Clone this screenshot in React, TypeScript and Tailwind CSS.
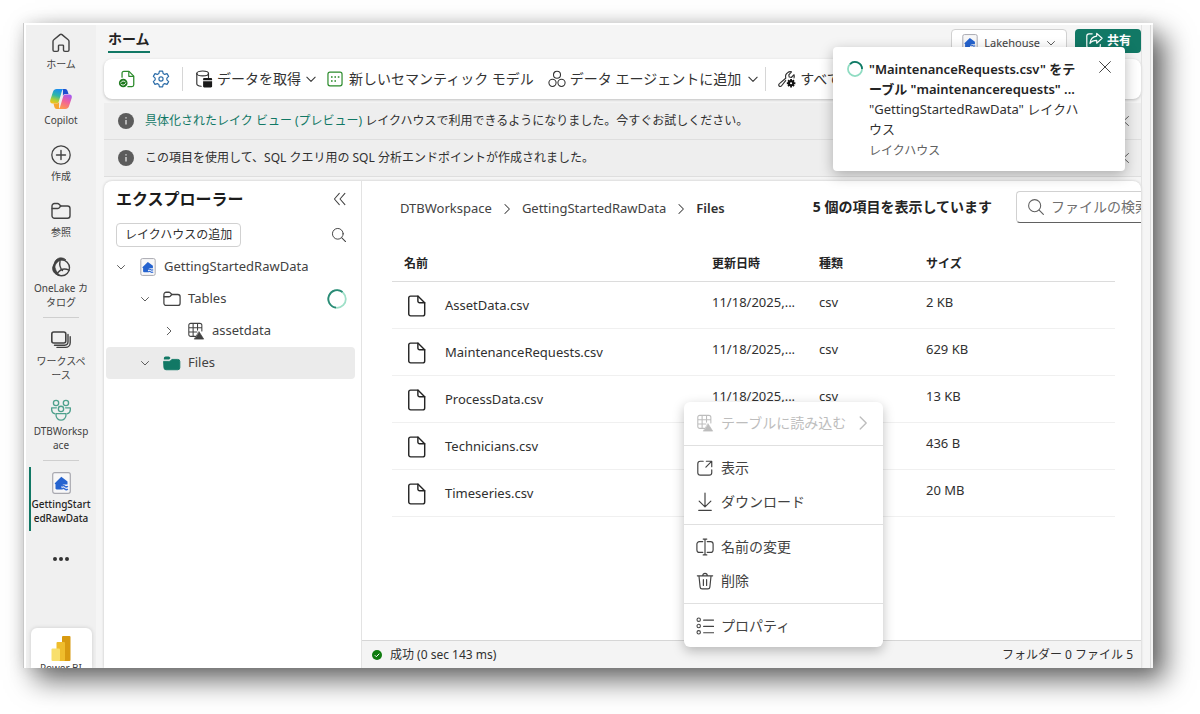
import type { ReactNode } from "react";

type IconProps = { className?: string };

const Svg = ({ className = "size-5", children }: IconProps & { children: ReactNode }) => (
  <svg
    viewBox="0 0 20 20"
    fill="none"
    stroke="currentColor"
    strokeLinecap="round"
    strokeLinejoin="round"
    className={`shrink-0 ${className}`}
    aria-hidden="true"
  >
    {children}
  </svg>
);

const HomeIcon = () => (
  <Svg>
    <path d="M9 1.6a1.6 1.6 0 0 1 2 0l6.2 5.2c.5.4.8 1 .8 1.600v8.600c0 .8-.6 1.400-1.400 1.400h-2.700c-.8 0-1.400-.6-1.400-1.400v-4a.9.9 0 0 0-.9-.9H8.400a.9.9 0 0 0-.9.9v4c0 .8-.6 1.400-1.400 1.400H3.400c-.8 0-1.400-.6-1.400-1.400V8.400c0-.6.3-1.200.8-1.600z" strokeWidth="1.400" />
  </Svg>
);

const CopilotIcon = () => (
  <svg viewBox="0 0 24 24" className="size-6 shrink-0" aria-hidden="true">
    <defs>
      <linearGradient id="cpA" x1="0.6" y1="0" x2="0.3" y2="1">
        <stop offset="0" stopColor="#1b8cf0" />
        <stop offset="0.45" stopColor="#2fb7a8" />
        <stop offset="0.75" stopColor="#a9cf3a" />
        <stop offset="1" stopColor="#f5c11a" />
      </linearGradient>
      <linearGradient id="cpB" x1="0.7" y1="0" x2="0.3" y2="1">
        <stop offset="0" stopColor="#a65bf0" />
        <stop offset="0.45" stopColor="#f0609c" />
        <stop offset="1" stopColor="#ff9a4d" />
      </linearGradient>
    </defs>
    <path d="M14 2h2.200c1.200 0 2 .8 2.400 2l.9 3h-3.200c-1.200 0-2 .7-2.400 2z" fill="#1d4fd0" />
    <path d="M7.500 2h7.300c-1 .3-1.600 1.200-2 2.500l-2.900 9.800c-.4 1.300-1.200 2.200-2.600 2.200H3.600c-2 0-2.900-1.600-2.300-3.500L4.100 4.400C4.600 2.900 5.900 2 7.500 2z" fill="url(#cpA)" />
    <path d="M10 22H7.800c-1.200 0-2-.8-2.400-2l-.9-3.500h3.200c1.200 0 2-.7 2.400-2z" fill="#f7a531" />
    <path d="M16.500 22H9.200c1-.3 1.600-1.200 2-2.500l2.900-9.800c.4-1.300 1.200-2.200 2.600-2.200h3.700c2 0 2.900 1.600 2.300 3.500l-2.800 8.600c-.5 1.500-1.800 2.400-3.400 2.400z" fill="url(#cpB)" />
  </svg>
);

const CreateIcon = () => (
  <Svg>
    <circle cx="10" cy="10" r="9.200" strokeWidth="1.300" />
    <path d="M10 5.500v9M5.500 10h9" strokeWidth="1.400" />
  </Svg>
);

const FolderIcon = ({ className }: IconProps) => (
  <Svg className={className}>
    <path d="M1 5a2.500 2.500 0 0 1 2.500-2.500h3c.6 0 1.200.3 1.600.7L9.800 5h6.700A2.500 2.500 0 0 1 19 7.500v7.200a2.500 2.500 0 0 1-2.500 2.500h-13A2.500 2.500 0 0 1 1 14.700z" strokeWidth="1.400" />
    <path d="M1.200 7.500h5.300c.6 0 1.100-.2 1.500-.6L9.800 5" strokeWidth="1.400" />
  </Svg>
);

const FolderFilledIcon = () => (
  <Svg className="size-[18px] text-[#117865]">
    <path d="M1 8.200h5.500c.8 0 1.500-.3 2-.8l1.300-1.400h6.400A2.300 2.300 0 0 1 18.700 8.300v6.900a2.300 2.300 0 0 1-2.300 2.300H3.300A2.300 2.300 0 0 1 1 15.200z" fill="currentColor" />
    <path d="M1 6V4.800c0-1 .8-1.900 1.900-1.900h3.300c.5 0 1 .2 1.400.6L8.300 4.400 7.100 5.700c-.2.200-.5.300-.8.300z" fill="currentColor" stroke="none" />
  </Svg>
);

const OneLakeIcon = () => (
  <Svg>
    <circle cx="10.500" cy="10.800" r="8" strokeWidth="1.400" />
    <path d="M3 7.500C3.300 3.500 6.500.8 10 .8c2 0 3.800.8 5 2.200-3-.8-5.500-.2-7.500 1.300C5.500 5.800 4 8 3.300 11z" fill="currentColor" strokeWidth=".6" />
    <path d="M3.600 7C.8 9 .8 13.500 3.500 16c1.500 1.500 3.500 2.300 5.500 2.500-3.500-3-5.400-7-5.400-11.500z" fill="currentColor" strokeWidth=".6" />
    <path d="M9 4.500c-.8 3.500.3 6.800 2.500 9M18 13.200c-4-2-8.500-1-11.500 3" strokeWidth="1.400" />
  </Svg>
);

const WorkspacesIcon = () => (
  <Svg>
    <rect x="0.800" y="2" width="14" height="11" rx="2" strokeWidth="1.600" />
    <path d="M17 4.500v7.300a3.400 3.400 0 0 1-3.400 3.400H3.500M19.200 6.800v6a4.600 4.600 0 0 1-4.600 4.600H6" strokeWidth="1.400" />
  </Svg>
);

const PeopleIcon = () => (
  <Svg className="size-[22px] text-[#4fa18d]">
    <circle cx="5.500" cy="3.600" r="2.400" strokeWidth="1.200" />
    <circle cx="14.500" cy="3.600" r="2.400" strokeWidth="1.200" />
    <circle cx="10" cy="9" r="2.400" strokeWidth="1.200" />
    <path d="M5.500 13.300h9v1.400a4.500 4.500 0 0 1-9 0zM5.800 8H1.500v1.600c0 2 1 3.300 2.700 3.800M14.200 8h4.300v1.600c0 2-1 3.300-2.700 3.800" strokeWidth="1.200" />
  </Svg>
);

const LakehouseIcon = ({ className = "h-[22px] w-[19px]" }: IconProps) => (
  <svg viewBox="0 0 19 22" className={`shrink-0 ${className}`} aria-hidden="true">
    <rect x="0.700" y="0.700" width="17.600" height="20.600" rx="2" fill="#f7f7f8" stroke="#a9a9b0" strokeWidth="1.200" />
    <path d="M9.300 4.800 15.500 9.500v3H11l-1.700 2.200 1 2.800H4.700c-.8 0-1.200-.5-1.200-1.200v-4.100c-.7 0-1-.6-.5-1.200z" fill="#2563cf" />
    <path d="M9.800 14.200c1-.9 2-.9 3 0s2 .9 3 0M9.800 17c1-.9 2-.9 3 0s2 .9 3 0" fill="none" stroke="#2f6ad6" strokeWidth="1.500" />
  </svg>
);

const PowerBiIcon = () => (
  <svg viewBox="0 0 20 25" className="h-[25px] w-5 shrink-0" aria-hidden="true">
    <rect x="11" y="0" width="8.500" height="25" rx="1" fill="#d89a10" />
    <rect x="5.500" y="6" width="8.500" height="19" rx="1" fill="#efbd2c" />
    <rect x="0.500" y="12.500" width="8.500" height="12.500" rx="1" fill="#f8df6c" />
  </svg>
);

const ChevronDown = ({ className = "size-3" }: IconProps) => (
  <Svg className={className}><path d="m3 7 7 7 7-7" strokeWidth="1.700" /></Svg>
);
const ChevronRight = ({ className = "size-3" }: IconProps) => (
  <Svg className={className}><path d="m6.500 2.500 7.500 7.500-7.500 7.500" strokeWidth="1.700" /></Svg>
);
const SearchIcon = ({ className = "size-[18px]" }: IconProps) => (
  <Svg className={className}>
    <circle cx="8.500" cy="8.500" r="6.700" strokeWidth="1.200" />
    <path d="m13.500 13.500 4.700 4.700" strokeWidth="1.300" />
  </Svg>
);
const CloseIcon = () => (
  <Svg className="size-3"><path d="m1 1 18 18M19 1 1 19" strokeWidth="1.500" /></Svg>
);
const DoubleChevron = () => (
  <Svg className="size-[14px]"><path d="M9 2 2 10l7 8M17 2l-7 8 7 8" strokeWidth="1.500" /></Svg>
);

const FileRefreshIcon = () => (
  <Svg className="size-[18px] text-[#2a8a2a]">
    <path d="M4.500 8V3.500c0-1.200.8-2 2-2h5.700l5.300 5.300v9.700c0 1.200-.8 2-2 2H11" strokeWidth="1.400" />
    <path d="M12 1.800V7h5.200" strokeWidth="1.300" />
    <circle cx="5.800" cy="14.500" r="4.800" fill="#1e7a1e" stroke="none" />
    <path d="M3.200 14c.8-2 3.800-2.400 5.200-.6M8.400 15c-.8 2-3.800 2.400-5.200.6" stroke="#fff" strokeWidth="1.100" />
  </Svg>
);

const GearIcon = () => (
  <Svg className="size-[18px] text-[#2b6ca8]">
    <path d="M8.200 1.200h3.600l.6 2.700 1.700 1 2.600-.9 1.800 3.100-2 1.900v2l2 1.900-1.800 3.100-2.600-.9-1.700 1-.6 2.700H8.200l-.6-2.700-1.700-1-2.600.9-1.800-3.100 2-1.900V9l-2-1.900L3.300 4l2.600.9 1.700-1z" strokeWidth="1.300" />
    <circle cx="10" cy="10" r="2.300" strokeWidth="1.300" />
  </Svg>
);

const DatabaseIcon = () => (
  <Svg className="size-[18px]">
    <ellipse cx="8.500" cy="3.800" rx="6.500" ry="2.700" strokeWidth="1.300" />
    <path d="M2 3.800v11.600c0 1.500 2 2.500 4.800 2.700M15 3.800v4.500" strokeWidth="1.300" />
    <path d="M9 10.300c0-.8.4-1.300 1.200-1.300h7.500c.8 0 1.300.5 1.300 1.300v1H9zM9 12.500h10v5.600c0 .8-.5 1.300-1.300 1.300h-7.500c-.8 0-1.200-.5-1.200-1.300z" fill="#1a1a1a" stroke="none" />
  </Svg>
);

const SemanticIcon = () => (
  <Svg className="size-4 text-[#2a8a2a]">
    <rect x="1.200" y="1.500" width="17.600" height="17" rx="2.500" strokeWidth="1.500" />
    <path d="M5 7.500h2M9.300 7.500h2M13.500 7.500h2M5 12.500h2M9.300 12.500h2" strokeWidth="2" strokeLinecap="butt" />
  </Svg>
);

const AgentIcon = () => (
  <Svg className="size-[18px]">
    <circle cx="10" cy="5.300" r="3.900" strokeWidth="1.200" />
    <circle cx="5" cy="14.300" r="4" strokeWidth="1.200" />
    <circle cx="15" cy="14.300" r="4" strokeWidth="1.200" />
  </Svg>
);

const WrenchIcon = () => (
  <Svg className="size-[18px]">
    <path d="M8.500 11.700 4 17.500c-.8 1-2 1-2.700.3s-.7-1.900.3-2.700l7-6C8 6.500 8.800 4 11 2.700c1.100-.8 2.500-1 4-.6l-3 3.300.5 2.400 2.300.5 3-3c.5 1.300.4 2.300 0 3.500" strokeWidth="1.300" />
    <path d="M14.500 10v9.500M9.800 14.700h9.500M11.200 11.400l6.600 6.600M17.800 11.400 11.200 18" stroke="#111" strokeWidth="2" strokeLinecap="butt" />
    <circle cx="14.500" cy="14.700" r="3.300" fill="#111" stroke="none" />
    <circle cx="14.500" cy="14.700" r="1.200" fill="#fff" stroke="none" />
  </Svg>
);

const ShareIcon = () => (
  <Svg className="size-[18px]">
    <path d="M8 2H4.500A2.500 2.500 0 0 0 2 4.500v11A2.500 2.500 0 0 0 4.500 18h10a2.500 2.500 0 0 0 2.500-2.500V14" strokeWidth="1.300" />
    <path d="m13 1.500 6 5.500-6 5.500V9.300c-3.500 0-5.800 1-7.500 3.400C6 8 8.500 5 13 4.500z" strokeWidth="1.300" />
  </Svg>
);

const InfoIcon = () => (
  <svg viewBox="0 0 16 16" className="size-4 shrink-0" aria-hidden="true">
    <circle cx="8" cy="8" r="8" fill="#5c5c5c" />
    <path d="M8 7v4.500M8 4.200v1.200" stroke="#e4e4e4" strokeWidth="1.300" />
  </svg>
);

const TableWarnIcon = () => (
  <Svg className="size-[18px]">
    <path d="M9.500 16H4.200A2.200 2.200 0 0 1 2 13.800V3.700c0-1.200 1-2.200 2.200-2.200h10c1.300 0 2.300 1 2.300 2.200V10M2 6.300h14.500M2 11.200h9M6.800 1.500V16M11.700 1.500V9" strokeWidth="1.200" />
    <path d="m13.500 11 5 8h-10z" fill="currentColor" strokeWidth=".8" />
  </Svg>
);

const FileIcon = () => (
  <Svg className="size-[22px] text-[#242424]">
    <path d="M4.200 1h6.600L17 7v10.200c0 1-.8 1.800-1.800 1.800h-11c-.9 0-1.700-.8-1.700-1.800V2.800C2.500 1.800 3.300 1 4.200 1z" strokeWidth="1.300" />
    <path d="M10.800 1.200v4.300c0 .8.700 1.500 1.500 1.500H17" strokeWidth="1.300" />
  </Svg>
);

const OpenIcon = () => (
  <Svg className="size-[18px]">
    <path d="M8 2.500H4.800A2.800 2.800 0 0 0 2 5.300v10A2.800 2.800 0 0 0 4.800 18h9.900a2.800 2.800 0 0 0 2.800-2.700V12M11.500 2.500h6v6M17.300 2.700 11 9" strokeWidth="1.300" />
  </Svg>
);
const DownloadIcon = () => (
  <Svg className="h-[22px] w-[18px]">
    <path d="M10 0v15M3.500 9l6.500 6.500L16.500 9M3 19.300h14" strokeWidth="1.300" />
  </Svg>
);
const RenameIcon = () => (
  <Svg className="size-[18px]">
    <path d="M7.500 4H3.800A2.800 2.800 0 0 0 1 6.800v6.400A2.800 2.800 0 0 0 3.800 16h3.700M12.500 4h3.700A2.800 2.800 0 0 1 19 6.800v6.400a2.800 2.800 0 0 1-2.800 2.800h-3.700M10 1.200v17.600M8 1.200h4M8 18.800h4" strokeWidth="1.300" />
  </Svg>
);
const TrashIcon = () => (
  <Svg className="size-[18px]">
    <path d="M1.500 4.300h17M7.500 4a2.500 2.500 0 0 1 5 0M3.300 4.500l1.300 12.300c.1 1.200 1 2 2.200 2h6.400c1.200 0 2.100-.8 2.200-2l1.300-12.300M8.200 8.500v6.500M11.800 8.500v6.500" strokeWidth="1.300" />
  </Svg>
);
const ListIcon = () => (
  <Svg className="size-[18px]">
    <circle cx="3" cy="3" r="1.900" strokeWidth="1.200" />
    <circle cx="3" cy="10" r="1.900" strokeWidth="1.200" />
    <circle cx="3" cy="17" r="1.900" strokeWidth="1.200" />
    <path d="M8.500 3.500h11M8.500 10.500h11M8.500 17.500h11" strokeWidth="1.300" />
  </Svg>
);

const Spinner = ({ className = "size-5" }: IconProps) => (
  <svg viewBox="0 0 20 20" fill="none" className={`shrink-0 ${className}`} role="img" aria-label="loading">
    <circle cx="10" cy="10" r="8.800" stroke="#9fe0c8" strokeWidth="1.800" />
    <path d="M9 18.700A8.800 8.800 0 1 1 15.500 3" stroke="#2b8a76" strokeWidth="1.800" />
  </svg>
);

const SpinnerTop = () => (
  <svg viewBox="0 0 20 20" fill="none" className="size-4 shrink-0" role="img" aria-label="loading">
    <circle cx="10" cy="10" r="8.800" stroke="#8fdcc2" strokeWidth="2.200" />
    <path d="M3.800 3.800A8.800 8.800 0 0 1 18.800 10" stroke="#117865" strokeWidth="2.200" />
  </svg>
);

const RailItem = ({ icon, lines }: { icon: ReactNode; lines: string[] }) => (
  <a href="#" className="flex w-full flex-col items-center gap-0.5 pt-1 pb-3">
    <span className="flex h-6 items-center">{icon}</span>
    <span className="flex flex-col items-center text-[10px] leading-[14px]">
      {lines.map((l) => <span key={l}>{l}</span>)}
    </span>
  </a>
);

const Rail = () => (
  <nav className="flex w-[70px] shrink-0 flex-col items-center bg-[#f0f0f0] pt-0.5 text-[#424242]">
    <RailItem icon={<HomeIcon />} lines={["ホーム"]} />
    <RailItem icon={<CopilotIcon />} lines={["Copilot"]} />
    <RailItem icon={<CreateIcon />} lines={["作成"]} />
    <RailItem icon={<FolderIcon />} lines={["参照"]} />
    <RailItem icon={<OneLakeIcon />} lines={["OneLake カ", "タログ"]} />
    <hr className="-mt-1 mb-1.5 w-9 border-[#cfcfcf]" />
    <RailItem icon={<WorkspacesIcon />} lines={["ワークスペ", "ース"]} />
    <RailItem icon={<PeopleIcon />} lines={["DTBWorksp", "ace"]} />
    <hr className="-mt-1 mb-1.5 w-9 border-[#cfcfcf]" />
    <a href="#" aria-current="page" className="relative flex w-full flex-col items-center gap-0.5 pt-1 pb-1.5">
      <span className="absolute inset-y-0 left-[3px] w-0.5 bg-[#117865]" />
      <span className="flex h-6 items-center"><LakehouseIcon /></span>
      <span className="flex flex-col items-center text-[10px] leading-[14px] font-medium text-[#242424]">
        <span>GettingStart</span>
        <span>edRawData</span>
      </span>
    </a>
    <button aria-label="その他" className="mt-[18px] flex h-5 items-center gap-0.5">
      <span className="size-1 rounded-full bg-[#333]" />
      <span className="size-1 rounded-full bg-[#333]" />
      <span className="size-1 rounded-full bg-[#333]" />
    </button>
    <button className="mt-auto flex h-10 w-[61px] shrink-0 flex-col items-center rounded-t-md bg-white pt-2 text-[10px] leading-[14px] shadow-[0_0_4px_rgba(0,0,0,0.15)]">
      <PowerBiIcon />
      <span>Power BI</span>
    </button>
  </nav>
);

const Header = () => (
  <header className="flex h-[34px] shrink-0 items-start justify-between pt-1">
    <button className="ml-1 border-b-2 border-[#117865] pb-0.5 text-sm leading-5 font-bold text-[#242424]">ホーム</button>
    <div className="flex gap-2">
      <button className="flex h-7 items-center gap-1.5 rounded border border-[#d1d1d1] bg-white px-2.5 text-[11px] text-[#424242]">
        <LakehouseIcon className="h-[18px] w-4" />
        Lakehouse
        <ChevronDown className="size-2.5" />
      </button>
      <button className="flex h-6 items-center gap-1 rounded bg-[#117865] px-2.5 text-xs font-bold text-white">
        <ShareIcon />
        共有
      </button>
    </div>
  </header>
);

const Toolbar = () => (
  <div className="flex h-10 shrink-0 items-center overflow-hidden rounded-lg bg-white pl-[14px] text-sm whitespace-nowrap text-[#333] shadow-[0_1px_3px_rgba(0,0,0,0.22)]">
    <button aria-label="更新"><FileRefreshIcon /></button>
    <button aria-label="設定" className="ml-4"><GearIcon /></button>
    <span className="mx-3 h-6 w-px shrink-0 bg-[#d6d6d6]" />
    <button className="flex items-center gap-1"><DatabaseIcon />データを取得<ChevronDown /></button>
    <button className="ml-2.5 flex items-center gap-1.5"><SemanticIcon />新しいセマンティック モデル</button>
    <button className="ml-3.5 flex items-center gap-1"><AgentIcon />データ エージェントに追加<ChevronDown className="ml-0.5 size-3" /></button>
    <span className="mr-3 ml-1.5 h-6 w-px shrink-0 bg-[#d6d6d6]" />
    <button className="flex items-center gap-1"><WrenchIcon />すべて表示</button>
  </div>
);

const InfoBar = ({ children }: { children: ReactNode }) => (
  <div className="flex h-[37px] shrink-0 items-center gap-[11px] border-b border-[#dedede] bg-[#eeeeee] pr-2.5 pl-[14px] text-xs text-[#303030]">
    <InfoIcon />
    <p className="flex-1">{children}</p>
    <button aria-label="閉じる"><Svg className="size-2.5"><path d="M15 1 5 10l10 9" strokeWidth="1.500" /></Svg></button>
  </div>
);

const Explorer = () => (
  <aside className="flex w-[258px] shrink-0 flex-col border-r border-[#e3e3e3] text-[#424242]">
    <div className="flex items-center justify-between pt-1.5 pr-[14px] pl-3">
      <h2 className="text-base leading-6 font-bold text-[#1c1c1c]">エクスプローラー</h2>
      <button aria-label="折りたたむ"><DoubleChevron /></button>
    </div>
    <div className="mt-3 flex items-center justify-between pr-[14px] pl-3">
      <button className="h-6 rounded border border-[#d1d1d1] px-2 text-xs text-[#303030]">レイクハウスの追加</button>
      <button aria-label="検索"><SearchIcon className="size-4" /></button>
    </div>
    <ul className="mt-1 pr-1.5 pl-0.5 text-[13px]">
      <li className="flex h-8 items-center gap-2 pl-2.5">
        <ChevronDown className="size-2.5" />
        <LakehouseIcon className="ml-1.5 h-[18px] w-4" />
        <span>GettingStartedRawData</span>
      </li>
      <li className="flex h-8 items-center gap-[7px] pr-2 pl-[34px]">
        <ChevronDown className="size-2.5" />
        <FolderIcon className="ml-1.5 size-[18px]" />
        <span className="flex-1">Tables</span>
        <Spinner />
      </li>
      <li className="flex h-8 items-center gap-[7px] pl-[58px]">
        <ChevronRight className="size-2.5" />
        <span className="ml-1.5"><TableWarnIcon /></span>
        <span>assetdata</span>
      </li>
      <li className="flex h-8 items-center gap-[7px] rounded bg-[#ebebeb] pl-[34px]">
        <ChevronDown className="size-2.5" />
        <span className="ml-1.5"><FolderFilledIcon /></span>
        <span>Files</span>
      </li>
    </ul>
  </aside>
);

const files = [
  { name: "AssetData.csv", date: "11/18/2025,...", type: "csv", size: "2 KB" },
  { name: "MaintenanceRequests.csv", date: "11/18/2025,...", type: "csv", size: "629 KB" },
  { name: "ProcessData.csv", date: "11/18/2025,...", type: "csv", size: "13 KB" },
  { name: "Technicians.csv", date: "11/18/2025,...", type: "csv", size: "436 B" },
  { name: "Timeseries.csv", date: "11/18/2025,...", type: "csv", size: "20 MB" },
];

const FileTable = () => (
  <div className="mt-6 pr-[26px] pl-[30px]">
    <table className="w-full table-fixed text-left text-[13px] text-[#303030]">
      <colgroup>
        <col />
        <col className="w-[107px]" />
        <col className="w-[107px]" />
        <col className="w-[201px]" />
      </colgroup>
      <thead>
        <tr className="h-[34px] border-b border-[#dcdcdc] text-xs text-[#242424]">
          <th className="px-3 font-bold">名前</th>
          <th className="px-3 font-bold">更新日時</th>
          <th className="px-3 font-bold">種類</th>
          <th className="px-3 font-bold">サイズ</th>
        </tr>
      </thead>
      <tbody>
        {files.map((f) => (
          <tr key={f.name} className="h-[47px] border-b border-[#f0f0f0]">
            <td className="pt-0.5 pl-3.5">
              <span className="flex items-center gap-[17px]"><FileIcon />{f.name}</span>
            </td>
            <td className="pb-1 pl-3 whitespace-nowrap">{f.date}</td>
            <td className="px-3 pb-1">{f.type}</td>
            <td className="px-3 pb-1">{f.size}</td>
          </tr>
        ))}
      </tbody>
    </table>
  </div>
);

const MenuItem = ({ icon, label, disabled }: { icon: ReactNode; label: string; disabled?: boolean }) => (
  <button
    role="menuitem"
    disabled={disabled}
    className="flex h-[34px] w-full items-center gap-[7px] px-3 text-left whitespace-nowrap disabled:text-[#bdbdbd]"
  >
    {icon}
    <span className="flex-1">{label}</span>
    {disabled && <ChevronRight className="size-4" />}
  </button>
);

const Divider = () => <hr className="my-[5px] border-[#e0e0e0]" />;

const ContextMenu = () => (
  <div role="menu" className="absolute top-[221px] left-[322px] w-[199px] rounded-md bg-white py-1 text-sm text-[#424242] shadow-[0_4px_12px_rgba(0,0,0,0.25)]">
    <MenuItem icon={<TableWarnIcon />} label="テーブルに読み込む" disabled />
    <Divider />
    <MenuItem icon={<OpenIcon />} label="表示" />
    <MenuItem icon={<DownloadIcon />} label="ダウンロード" />
    <Divider />
    <MenuItem icon={<RenameIcon />} label="名前の変更" />
    <MenuItem icon={<TrashIcon />} label="削除" />
    <Divider />
    <MenuItem icon={<ListIcon />} label="プロパティ" />
  </div>
);

const Content = () => (
  <section className="relative flex min-w-0 flex-1 flex-col">
    <div className="mt-2.5 flex h-8 items-center pl-[38px]">
      <nav className="flex flex-1 items-center pt-1 text-[13px] text-[#424242]">
        <a href="#">DTBWorkspace</a>
        <ChevronRight className="mx-[9px] size-3" />
        <a href="#">GettingStartedRawData</a>
        <ChevronRight className="mx-[9px] size-3" />
        <span className="font-semibold text-[#303030]">Files</span>
      </nav>
      <p className="mr-6 text-sm font-bold whitespace-nowrap text-[#242424]">5 個の項目を表示しています</p>
      <label className="flex h-8 w-[125px] shrink-0 items-center gap-1.5 overflow-hidden rounded-l border border-r-0 border-[#d1d1d1] border-b-[#616161] pl-2.5 text-[#616161]">
        <SearchIcon />
        <input
          type="text"
          aria-label="ファイルの検索"
          placeholder="ファイルの検索"
          className="w-28 shrink-0 text-sm outline-none placeholder:text-[#707070]"
        />
      </label>
    </div>
    <FileTable />
    <footer className="mt-auto flex h-7 items-center border-t border-[#d6d6d6] bg-[#f4f4f4] pr-2 pl-2.5 text-xs text-[#303030]">
      <svg viewBox="0 0 10 10" className="mr-2 size-2.5" aria-hidden="true">
        <circle cx="5" cy="5" r="5" fill="#107c10" />
        <path d="m2.800 5.200 1.500 1.500 3-3" fill="none" stroke="#fff" />
      </svg>
      <span className="flex-1">成功 (0 sec 143 ms)</span>
      <span>フォルダー 0 ファイル 5</span>
    </footer>
    <ContextMenu />
  </section>
);

const Toast = () => (
  <div role="status" className="absolute top-6 right-7 flex w-[292px] gap-1.5 rounded bg-white px-[14px] py-3 text-[#303030] shadow-[0_4px_14px_rgba(0,0,0,0.28)]">
    <span className="pt-0.5"><SpinnerTop /></span>
    <div className="flex-1 whitespace-nowrap">
      <p className="text-[13px] leading-5 font-semibold text-[#242424]">"MaintenanceRequests.csv" をテ<br />ーブル "maintenancerequests" ...</p>
      <p className="text-[13px] leading-5">"GettingStartedRawData" レイクハ<br />ウス</p>
      <p className="mt-1 text-xs leading-4 text-[#616161]">レイクハウス</p>
    </div>
    <button aria-label="閉じる" className="flex h-4 items-center"><CloseIcon /></button>
  </div>
);

export default function App() {
  return (
    <div className="flex h-screen overflow-hidden bg-white pt-[23px] pr-[47px] pb-[46px] pl-[23px] font-['Noto_Sans','Noto_Sans_CJK_JP',sans-serif]">
      <div className="relative flex min-w-0 flex-1 border-l border-[#c8c8c8] bg-white pt-0.5 pl-0.5 shadow-[12px_12px_26px_rgba(0,0,0,0.6),0_0_14px_rgba(0,0,0,0.1)]">
        <div className="flex min-w-0 flex-1 overflow-hidden">
          <Rail />
          <main className="flex min-w-0 flex-1 flex-col bg-[#f5f5f5] pl-2">
            <div className="flex min-h-0 flex-1">
              <div className="flex min-w-0 flex-1 flex-col">
                <Header />
                <Toolbar />
                <div className="mt-1 mb-1 flex flex-col">
                  <InfoBar>
                    <a href="#" className="text-[#117865]">具体化されたレイク ビュー (プレビュー)</a> レイクハウスで利用できるようになりました。今すぐお試しください。
                  </InfoBar>
                  <InfoBar>この項目を使用して、SQL クエリ用の SQL 分析エンドポイントが作成されました。</InfoBar>
                </div>
                <div className="flex min-h-0 flex-1 overflow-hidden rounded-t-lg bg-white shadow-[0_0_3px_rgba(0,0,0,0.2)]">
                  <Explorer />
                  <Content />
                </div>
              </div>
              <div className="w-3 border-l border-[#e3e3e3] pl-2">
                <div className="h-full border-l border-[#dcdcdc]" />
              </div>
            </div>
          </main>
        </div>
        <Toast />
      </div>
    </div>
  );
}
